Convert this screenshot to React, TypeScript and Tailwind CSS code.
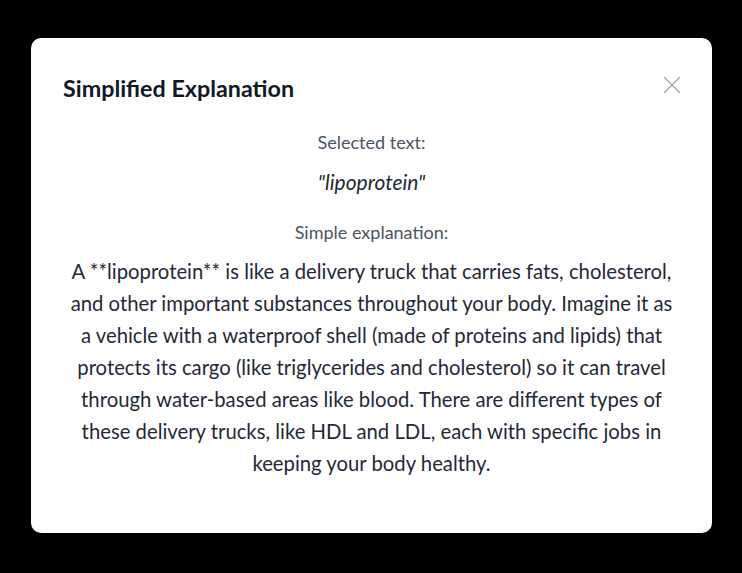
import React from "react";
import { X } from "lucide-react";

export default function App() {
  return (
    <div
      className="w-[742px] h-[573px] bg-black pt-[38px] pl-[31px]"
      style={{ fontFamily: "Lato, 'Noto Sans', sans-serif" }}
    >
      <div className="w-[681px] h-[495px] bg-white rounded-[10px] px-8 pt-[32px]">
        <div className="flex items-center justify-between">
          <h2 className="text-[23.3px] leading-[36px] font-bold text-[#111827]">
            Simplified Explanation
          </h2>
          <X className="w-[30px] h-[30px] text-[#9ca3af] mr-[-7px] mt-[-6px]" strokeWidth={1} />
        </div>
        <div className="flex flex-col items-center text-center mt-[22px]">
          <p className="text-[18px] leading-[28px] text-[#4b5563]">Selected text:</p>
          <p className="text-[21px] leading-[30px] italic text-[#1f2937] mt-[11px]">"lipoprotein"</p>
          <p className="text-[18px] leading-[28px] text-[#4b5563] mt-[21px]">Simple explanation:</p>
          <p className="w-[608px] text-[20.3px] leading-[32px] text-[#1f2937] mt-[9px]">
            A **lipoprotein** is like a delivery truck that carries fats, cholesterol, and other
            important substances throughout your body. Imagine it as a vehicle with a waterproof
            shell (made of proteins and lipids) that protects its cargo (like triglycerides and
            cholesterol) so it can travel through water-based areas like blood. There are different
            types of these delivery trucks, like HDL and LDL, each with specific jobs in keeping your
            body healthy.
          </p>
        </div>
      </div>
    </div>
  );
}
